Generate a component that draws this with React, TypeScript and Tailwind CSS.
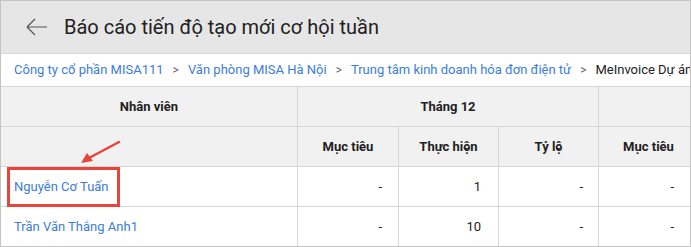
const crumbs = [
  "Công ty cổ phần MISA111",
  "Văn phòng MISA Hà Nội",
  "Trung tâm kinh doanh hóa đơn điện tử",
];

const rows = [
  { name: "Nguyễn Cơ Tuấn", target: "-", done: "1", rate: "-", next: "-" },
  { name: "Trần Văn Thắng Anh1", target: "-", done: "10", rate: "-", next: "-" },
];

const cell = "border-r border-b border-[#d6d6d6] flex items-center shrink-0";

const App = () => {
  return (
    <div
      className="relative w-[691px] h-[247px] overflow-hidden border border-[#c4c4c4] bg-white flex flex-col"
      style={{ fontFamily: "Roboto, 'Liberation Sans', sans-serif" }}
    >
      {/* HEADER */}
      <div className="h-[53px] shrink-0 bg-[#e6e6e6] border-b border-[#d8d8d8] flex items-center pl-[24px]">
        <svg width="24" height="20" viewBox="0 0 24 20" className="text-[#555]">
          <path d="M2 10 H22 M2 10 L10 2 M2 10 L10 18" stroke="currentColor" strokeWidth="1.2" fill="none" />
        </svg>
        <h1 className="ml-[15px] text-[20px] text-[#212121] whitespace-nowrap">
          Báo cáo tiến độ tạo mới cơ hội tuần
        </h1>
      </div>

      {/* BREADCRUMB */}
      <div className="h-[32px] shrink-0 flex items-center pl-[13px] text-[13px] whitespace-nowrap">
        {crumbs.map((c) => (
          <div key={c} className="flex items-center">
            <span className="text-[#3b7ddb]">{c}</span>
            <span className="mx-[9px] text-[#666] text-[12px]">&gt;</span>
          </div>
        ))}
        <span className="text-[#212121]">MeInvoice Dự án</span>
      </div>

      {/* TABLE */}
      <div className="border-t border-[#d6d6d6] text-[13px] text-[#212121]">
        <div className="flex h-[40px] bg-[#f1f1f1] font-bold">
          <div className={`${cell} w-[297px] justify-center`}>Nhân viên</div>
          <div className={`${cell} w-[301px] justify-center`}>Tháng 12</div>
          <div className={`${cell} w-[100px]`}></div>
        </div>
        <div className="flex h-[40px] bg-[#f1f1f1] font-bold">
          <div className={`${cell} w-[297px]`}></div>
          <div className={`${cell} w-[101px] justify-center`}>Mục tiêu</div>
          <div className={`${cell} w-[100px] justify-center`}>Thực hiện</div>
          <div className={`${cell} w-[100px] justify-center`}>Tỷ lệ</div>
          <div className={`${cell} w-[100px] justify-center`}>Mục tiêu</div>
        </div>
        {rows.map((r) => (
          <div key={r.name} className="flex h-[40px]">
            <div className={`${cell} w-[297px] pl-[13px] text-[#3b7ddb]`}>{r.name}</div>
            <div className={`${cell} w-[101px] justify-end pr-[16px]`}>{r.target}</div>
            <div className={`${cell} w-[100px] justify-end pr-[17px]`}>{r.done}</div>
            <div className={`${cell} w-[100px] justify-end pr-[15px]`}>{r.rate}</div>
            <div className={`${cell} w-[100px] justify-end pr-[24px]`}>{r.next}</div>
          </div>
        ))}
      </div>

      {/* ANNOTATION */}
      <div className="absolute left-[6px] top-[166px] w-[113px] h-[40px] border-[3px] border-[#e8443c]"></div>
      <svg className="absolute left-0 top-0" width="691" height="247">
        <line x1="118" y1="141" x2="88" y2="157" stroke="#e8443c" strokeWidth="2.5" strokeLinecap="round" />
        <path d="M80 162 L86 152 L92 160 Z" fill="#e8443c" />
      </svg>
    </div>
  );
};

export default App;
